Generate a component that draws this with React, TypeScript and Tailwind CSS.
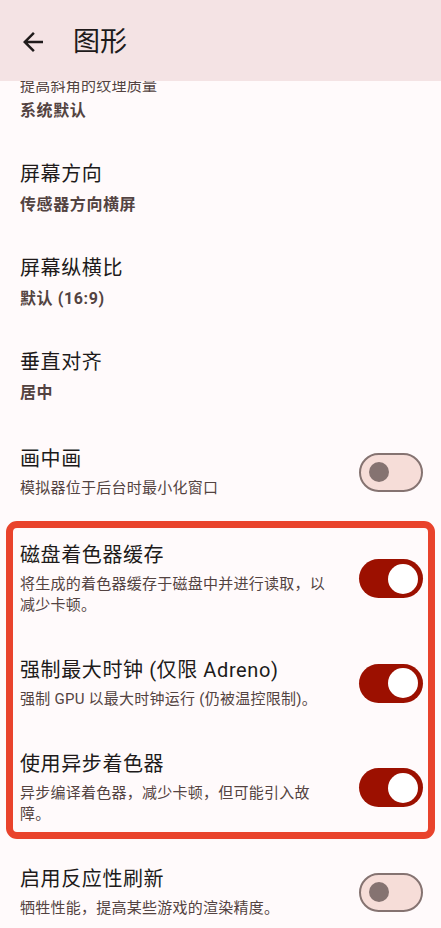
import React from "react";

const FONT = "font-['Roboto','Noto_Sans_CJK_SC',sans-serif]";

function Toggle({ on }: { on: boolean }) {
  if (on) {
    return (
      <div className="w-[64px] h-[39px] shrink-0 rounded-full bg-[#9c1000] flex items-center justify-end pr-[5px]">
        <div className="w-[30px] h-[30px] rounded-full bg-white" />
      </div>
    );
  }
  return (
    <div className="w-[64px] h-[39px] shrink-0 rounded-full border-[2.5px] border-[#857371] bg-[#f6ddd8] flex items-center pl-[7.5px]">
      <div className="w-5 h-5 rounded-full bg-[#857371]" />
    </div>
  );
}

function ValueItem({ title, value }: { title: string; value: string }) {
  return (
    <div className="px-5 py-[19px]">
      <div className="text-[20px] leading-[29px] tracking-[0.6px] text-[#201a1a]">{title}</div>
      <div className="mt-[5px] text-[16px] leading-[22px] tracking-[0.6px] font-bold text-[#534341]">{value}</div>
    </div>
  );
}

function SwitchItem({
  title,
  desc,
  on,
  pad = "py-[20px]",
}: {
  title: string;
  desc: string;
  on: boolean;
  pad?: string;
}) {
  return (
    <div className={`pl-5 pr-[18px] ${pad} flex items-center`}>
      <div className="w-[310px]">
        <div className="text-[20px] leading-[29px] tracking-[0.6px] text-[#201a1a]">{title}</div>
        <div className="mt-[4px] text-[15px] leading-[21px] tracking-[0.25px] text-[#534341]">{desc}</div>
      </div>
      <div className="ml-auto">
        <Toggle on={on} />
      </div>
    </div>
  );
}

export default function App() {
  return (
    <div className={`${FONT} w-[441px] h-[928px] overflow-hidden bg-[#fffafb] flex flex-col`}>
      <header className="h-[81px] shrink-0 bg-[#f4e3e4] flex items-center relative z-10 pt-[2px]">
        <svg
          className="ml-[18px]"
          width="30"
          height="30"
          viewBox="0 0 24 24"
          fill="#1f1b1b"
        >
          <path d="M20 11H7.83l5.59-5.59L12 4l-8 8 8 8 1.41-1.41L7.83 13H20v-2z" />
        </svg>
        <div className="ml-[25px] text-[27px] leading-[36px] text-[#201a1a]">图形</div>
      </header>
      <main className="flex-1 overflow-hidden">
        <div className="mt-[-5px] px-5 pb-[19px]">
          <div className="text-[15px] leading-[21px] tracking-[0.25px] text-[#534341]">提高斜角的纹理质量</div>
          <div className="mt-[3px] text-[16px] leading-[22px] tracking-[0.6px] font-bold text-[#534341]">系统默认</div>
        </div>
        <ValueItem title="屏幕方向" value="传感器方向横屏" />
        <ValueItem title="屏幕纵横比" value="默认 (16:9)" />
        <ValueItem title="垂直对齐" value="居中" />
        <SwitchItem title="画中画" desc="模拟器位于后台时最小化窗口" on={false} pad="py-[22px]" />
        <div className="relative">
          <SwitchItem
            title="磁盘着色器缓存"
            desc="将生成的着色器缓存于磁盘中并进行读取，以减少卡顿。"
            on={true}
          />
          <SwitchItem
            title="强制最大时钟 (仅限 Adreno)"
            desc="强制 GPU 以最大时钟运行 (仍被温控限制)。"
            on={true}
          />
          <SwitchItem
            title="使用异步着色器"
            desc="异步编译着色器，减少卡顿，但可能引入故障。"
            on={true}
          />
          <div className="absolute left-[6px] right-[6px] top-0 bottom-[6px] border-[7px] border-[#e9432c] rounded-[11px] pointer-events-none" />
        </div>
        <SwitchItem title="启用反应性刷新" desc="牺牲性能，提高某些游戏的渲染精度。" on={false} />
      </main>
    </div>
  );
}
